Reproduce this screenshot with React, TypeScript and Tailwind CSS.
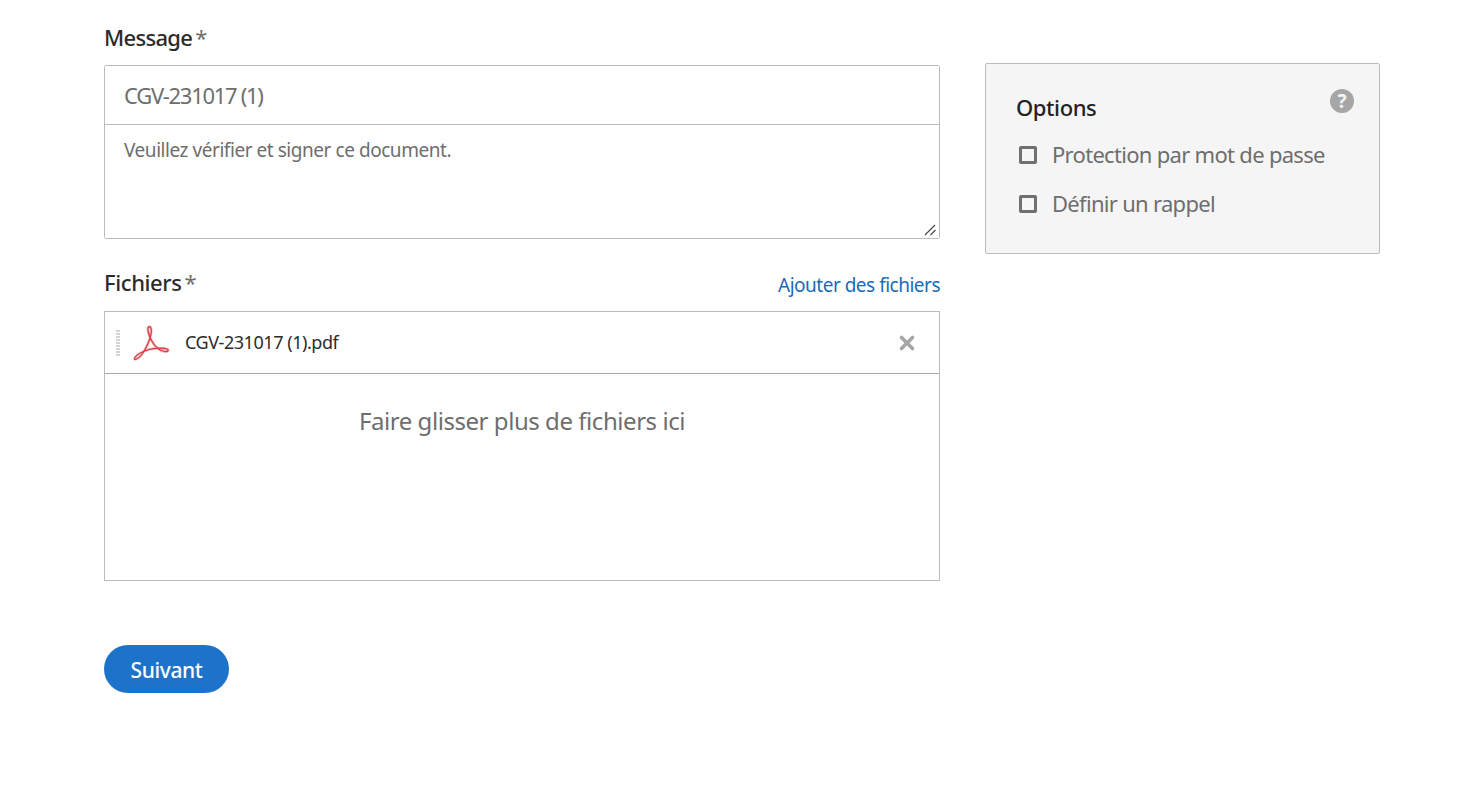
import { X } from "lucide-react";

const acrobatPath =
  "M3 32.5C1 35.5 5.5 35 9.5 30C14 24.4 19 13 19.3 6.5C19.5 2.5 18 0.8 16.6 2C15 3.5 16.5 10 19.5 15.5C23 22 28 26 33 26.5C36.5 26.8 37 24.8 35 24C32 22.8 24 22.5 17 24.5C10.5 26.4 5 29.5 3 32.5Z";

function PdfIcon() {
  return (
    <svg width="38" height="36" viewBox="0 0 38 36" fill="none" className="ml-[12px] shrink-0">
      <path d={acrobatPath} stroke="#f3c0c2" strokeWidth="2.8" strokeLinejoin="round" />
      <path d={acrobatPath} stroke="#d5363f" strokeWidth="1.2" strokeLinejoin="round" />
    </svg>
  );
}

function FieldLabel({ text, tight }: { text: string; tight?: boolean }) {
  return (
    <label
      className={
        tight
          ? "text-[22px] leading-[28px] font-medium tracking-[-0.7px] text-[#2c2c2c]"
          : "text-[22px] leading-[28px] font-medium tracking-[-0.4px] text-[#2c2c2c]"
      }
    >
      {text}
      <span className="ml-[3px] font-normal text-[#6e6e6e]">*</span>
    </label>
  );
}

function OptionRow({ text }: { text: string }) {
  return (
    <label className="flex h-[49px] items-center">
      <span className="ml-[2px] h-[18px] w-[18px] shrink-0 rounded-[2px] border-[3px] border-[#707070] bg-[#f5f5f5]" />
      <span className="ml-[15px] text-[22px] tracking-[-0.7px] text-[#6e6e6e]">{text}</span>
    </label>
  );
}

export default function App() {
  return (
    <main
      className="flex h-[801px] w-[1468px] gap-[45px] overflow-hidden bg-white pl-[104px] pt-[23px]"
      style={{ fontFamily: '"Noto Sans", sans-serif' }}
    >
      <div className="w-[836px] shrink-0">
        <FieldLabel text="Message" tight />
        <div className="relative mt-[13px] rounded-[2px] border border-[#bcbcbc]">
          <input
            defaultValue="CGV-231017 (1)"
            className="block h-[59px] w-full border-b border-[#bcbcbc] bg-white px-[19px] text-[22px] tracking-[-1.3px] text-[#6e6e6e] outline-none"
          />
          <textarea
            defaultValue="Veuillez vérifier et signer ce document."
            className="block h-[113px] w-full resize-none bg-white px-[19px] pt-[10px] text-[19px] leading-[30px] tracking-[-0.45px] text-[#6e6e6e] outline-none"
          />
          <svg width="14" height="14" viewBox="0 0 14 14" className="absolute bottom-[1px] right-[1px]" stroke="#4a4a4a" strokeWidth="1.2">
            <path d="M1 12L11 2M6.5 12L11.5 7" />
          </svg>
        </div>

        <div className="mt-[29px] flex items-start justify-between">
          <FieldLabel text="Fichiers" />
          <a className="mt-[5px] text-[19px] leading-[24px] tracking-[-0.5px] text-[#1a6bb8]">Ajouter des fichiers</a>
        </div>

        <div className="mt-[14px] h-[270px] border border-[#bcbcbc]">
          <div className="flex h-[62px] items-center border-b border-[#a8a8a8]">
            <span className="ml-[11px] h-[26px] w-[4px] shrink-0 bg-[repeating-linear-gradient(#d4d4d4_0_2px,transparent_2px_3px)]" />
            <PdfIcon />
            <span className="ml-[15px] text-[18px] tracking-[-0.45px] text-[#2c2c2c]">CGV-231017 (1).pdf</span>
            <X className="ml-auto mr-[21px] text-[#a6a6a6]" size={22} strokeWidth={4} />
          </div>
          <p className="pt-[31px] text-center text-[24px] leading-[32px] tracking-[-0.45px] text-[#6e6e6e]">
            Faire glisser plus de fichiers ici
          </p>
        </div>

        <button className="mt-[64px] block h-[48px] w-[125px] rounded-full bg-[#1d73c9] pt-[3px] text-[21px] font-medium tracking-[-0.4px] text-white">
          Suivant
        </button>
      </div>

      <aside className="relative mt-[40px] h-[191px] w-[395px] shrink-0 rounded-[2px] border border-[#bcbcbc] bg-[#f5f5f5] pl-[30px] pt-[28px]">
        <h2 className="text-[22px] leading-[30px] font-medium tracking-[-0.4px] text-[#222222]">Options</h2>
        <div className="absolute right-[25px] top-[25px] flex h-[24px] w-[24px] items-center justify-center rounded-full bg-[#a6a6a6] text-[19px] font-bold text-[#f5f5f5]">
          ?
        </div>
        <div className="ml-[1px] mt-[8px]">
          <OptionRow text="Protection par mot de passe" />
          <OptionRow text="Définir un rappel" />
        </div>
      </aside>
    </main>
  );
}
